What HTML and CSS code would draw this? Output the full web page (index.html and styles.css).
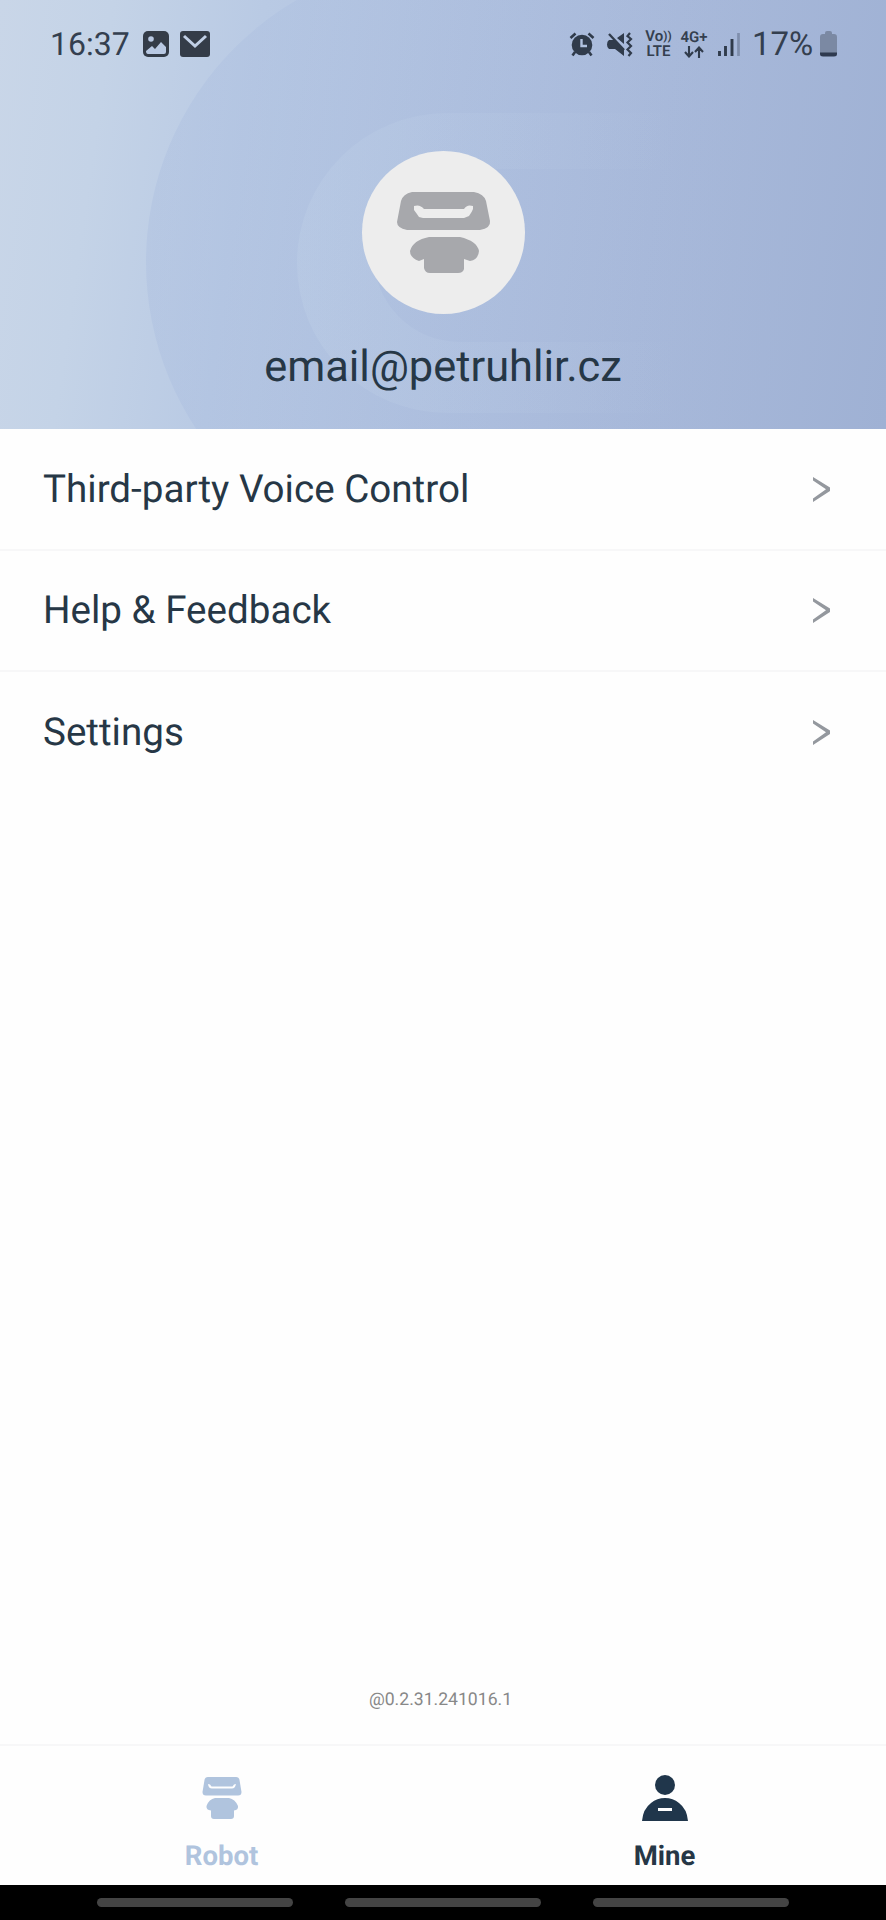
FILE: index.html
```html
<!DOCTYPE html>
<html lang="en">
<head>
  <meta charset="UTF-8">
  <meta name="viewport" content="width=device-width, initial-scale=1.0">
  <title>Mine</title>
  <link rel="stylesheet" href="styles.css">
</head>
<body>
  <header class="header">
    <!-- background rings -->
    <svg class="header-bg" width="886" height="429" viewBox="0 0 886 429">
      <defs>
        <linearGradient id="disc" gradientUnits="userSpaceOnUse" x1="146" y1="0" x2="800" y2="0">
          <stop offset="0" stop-color="#a2b6dc" stop-opacity=".28"/>
          <stop offset="1" stop-color="#a2b6dc" stop-opacity="0"/>
        </linearGradient>
        <linearGradient id="ring" gradientUnits="userSpaceOnUse" x1="297" y1="0" x2="680" y2="0">
          <stop offset="0" stop-color="#c4d5ea" stop-opacity=".26"/>
          <stop offset="1" stop-color="#c4d5ea" stop-opacity="0"/>
        </linearGradient>
      </defs>
      <path fill="url(#disc)" d="M886 -41H449A303 303 0 0 0 449 565H886Z"/>
      <path fill="url(#ring)" d="M720 113H447A150 150 0 0 0 447 413H720V342H460A86.500 86.500 0 0 1 460 169H720Z"/>
    </svg>

    <div class="status">
      <span class="time">16:37</span>
      <svg class="photo" width="26" height="26" viewBox="0 0 26 26">
        <rect width="26" height="26" rx="5" fill="#343c48"/>
        <circle cx="8" cy="8" r="2.800" fill="#b9c9e3"/>
        <path d="M3 20L9 15L12 18L18 11L23 16V21Q23 23 21 23H5Q3 23 3 20Z" fill="#b9c9e3"/>
      </svg>
      <svg class="mail" width="30" height="26" viewBox="0 0 30 26">
        <rect width="30" height="26" rx="3" fill="#343c48"/>
        <path d="M4 5L15 15L26 5" fill="none" stroke="#c0cfe6" stroke-width="3"/>
      </svg>
      <span class="spacer"></span>
      <svg class="alarm" width="26" height="25" viewBox="0 0 26 25">
        <circle cx="13" cy="13" r="10.300" fill="#303b4b"/>
        <path d="M1.500 6L6.500 1.500M24.500 6L19.500 1.500M6 20L3.500 23.500M20 20L22.500 23.500" stroke="#303b4b" stroke-width="2.600"/>
        <path d="M12.500 7V14H18" fill="none" stroke="#b0c1df" stroke-width="2.400"/>
      </svg>
      <svg class="mute" width="26" height="25" viewBox="0 0 26 25">
        <path d="M2 8H7L17 17V24L8 17H2Q0 16 0 12.500Q0 9 2 8ZM10 6L17 1V12Z" fill="#303b4b"/>
        <path d="M2 2L17 18" stroke="#303b4b" stroke-width="2.400"/>
        <path d="M23 1L20.500 4L24 7L20.500 10.500L24 14L20.500 17.500L24 21L21.500 24" fill="none" stroke="#303b4b" stroke-width="2.200"/>
      </svg>
      <span class="net volte"><span>Vo<small>))</small></span><span>LTE</span></span>
      <span class="net data"><span>4G+</span>
        <svg width="20" height="12" viewBox="0 0 20 12">
          <path d="M5 0V10M1 6L5 10.500L9 6M15 12V2M11 6L15 1.500L19 6" fill="none" stroke="#303b4b" stroke-width="2.100"/>
        </svg>
      </span>
      <svg class="signal" width="22" height="23" viewBox="0 0 22 23">
        <path d="M1.500 18V23M7.500 13V23M14 6V23" stroke="#303b4b" stroke-width="2.900"/>
        <path d="M20.500 0V23" stroke="#7f8eac" stroke-width="2.700"/>
      </svg>
      <span class="percent">17%</span>
      <svg class="battery" width="17" height="26" viewBox="0 0 17 26">
        <path d="M5 2Q5 0 7 0H10Q12 0 12 2V3H14Q17 3 17 6V22H0V6Q0 3 3 3H5Z" fill="#7b89a3"/>
        <path d="M0 21.500H17V23Q17 25.500 14 25.500H3Q0 25.500 0 23Z" fill="#2f3a4f"/>
      </svg>
    </div>

    <div class="avatar">
      <svg width="94" height="82" viewBox="0 0 94 82">
        <path fill-rule="evenodd" d="M15 0H77Q87 2 89 9L93 29Q94 36 83 38H10Q0 36 0 30L4 9Q6 2 15 0ZM17 14V18Q20 22 22 25L26 26H67L72 24Q75 20 76 17V14Q70 12 67 17H27Q23 12 17 14Z"/>
        <path d="M32 45H63Q80 49 82 59Q81 68 73 69L67 67V77Q66 81 61 81H33Q28 81 27 76V67L22 69Q13 66 13 59Q16 48 32 45Z"/>
      </svg>
    </div>
    <div class="email">email@petruhlir.cz</div>
  </header>

  <main class="menu">
    <div class="row">
      <span>Third-party Voice Control</span>
      <svg class="arrow" width="18" height="25" viewBox="0 0 18 25"><path d="M0 0L17 10.500V14L0 25V21.500L13 12.300L0 3.500Z"/></svg>
    </div>
    <div class="row">
      <span>Help &amp; Feedback</span>
      <svg class="arrow" width="18" height="25" viewBox="0 0 18 25"><path d="M0 0L17 10.500V14L0 25V21.500L13 12.300L0 3.500Z"/></svg>
    </div>
    <div class="row">
      <span>Settings</span>
      <svg class="arrow" width="18" height="25" viewBox="0 0 18 25"><path d="M0 0L17 10.500V14L0 25V21.500L13 12.300L0 3.500Z"/></svg>
    </div>
  </main>

  <div class="version">@0.2.31.241016.1</div>

  <nav class="tabs">
    <div class="tab">
      <svg width="40" height="43" viewBox="0 0 40 43">
        <path fill-rule="evenodd" d="M6 0H34Q37 0 37.500 3L39.500 15Q39.500 18.500 36 18.500H4Q0.500 18.500 0.500 15L2.500 3Q3 0 6 0ZM6 7Q6.500 11.500 10 11.500H30Q33 11.500 34 7L32 7.500L30.500 9.500H9.500L8 7.500Z"/>
        <path d="M13 21H27Q33 22 36 29Q36.500 33 32 33.500V39Q32 42 29 42H12Q9 42 9 39V33.500Q4 33 4.500 29Q7 22 13 21Z"/>
      </svg>
      <span>Robot</span>
    </div>
    <div class="tab active">
      <svg width="46" height="46" viewBox="0 0 46 46">
        <circle cx="23" cy="10" r="10"/>
        <path fill-rule="evenodd" d="M0 46Q1 34 9 28Q15 23 23 23Q31 23 37 28Q45 34 46 46ZM16 33V36H30V33Z"/>
      </svg>
      <span>Mine</span>
    </div>
  </nav>

  <div class="navbar"><i></i><i></i><i></i></div>
</body>
</html>
```
FILE: styles.css
```css
body {
  margin: 0;
  width: 886px;
  height: 1920px;
  display: flex;
  flex-direction: column;
  font-family: Roboto, sans-serif;
  text-rendering: geometricPrecision;
  color: #263746;
  background: #fefefe;
  overflow: hidden;
}

svg {
  display: block;
  flex: none;
}

.header {
  position: relative;
  height: 429px;
  flex: none;
  display: flex;
  flex-direction: column;
  align-items: center;
  background: linear-gradient(98deg, #c9d6e8 0%, #c4d3e7 12%, #b9cae4 28%, #b0c1df 50%, #a8b9da 72%, #9fb1d4 100%);
}

.header-bg {
  position: absolute;
  top: 0;
  left: 0;
}

/* status bar */
.status {
  position: relative;
  box-sizing: border-box;
  width: 100%;
  height: 88px;
  padding: 0 49px 0 50px;
  display: flex;
  align-items: center;
  color: #343f4f;
}

.time {
  width: 93px;
  font-size: 32px;
}

.mail {
  margin-left: 11px;
}

.spacer {
  flex: 1;
}

.mute {
  margin-left: 12px;
}

.net {
  display: flex;
  flex-direction: column;
  align-items: center;
  font-size: 15px;
  line-height: 15px;
  font-weight: 600;
}

.net small {
  font-size: 12px;
  line-height: 1;
  vertical-align: 1px;
}

.volte {
  width: 27px;
  margin-left: 12px;
}

.data {
  width: 28px;
  margin-left: 8px;
}

.net svg {
  margin-top: 1px;
}

.signal {
  margin-left: 10px;
}

.percent {
  width: 66px;
  margin-left: 12px;
  font-size: 33px;
}

.battery {
  margin-left: 2px;
}

/* profile */
.avatar {
  position: relative;
  box-sizing: border-box;
  width: 163px;
  height: 163px;
  margin-top: 63px;
  padding-top: 41px;
  padding-left: 35px;
  border-radius: 50%;
  background: #ededed;
  fill: #a7a8ac;
}

.email {
  position: relative;
  margin-top: 26px;
  font-size: 43.4px;
  line-height: 54px;
}

/* menu */
.row {
  box-sizing: border-box;
  height: 121.500px;
  padding: 1px 55px 0 43px;
  display: flex;
  align-items: center;
  justify-content: space-between;
  font-size: 38.600px;
  border-bottom: 2px solid #f7f7f8;
}

.row:last-child {
  border-bottom: none;
  padding-bottom: 2px;
}

.arrow {
  fill: #94989e;
}

.version {
  margin-top: auto;
  padding-bottom: 33px;
  padding-right: 5px;
  text-align: center;
  font-size: 17.600px;
  line-height: 22px;
  color: #888;
}

/* bottom tabs */
.tabs {
  height: 139px;
  flex: none;
  display: flex;
  border-top: 2px solid #f7f7f8;
}

.tab {
  flex: 1;
  display: flex;
  flex-direction: column;
  align-items: center;
  justify-content: flex-end;
  color: #b0c4de;
  fill: #b0c4de;
  font-size: 27.500px;
  font-weight: 700;
}

.tab span {
  margin-top: 20px;
  margin-bottom: 13px;
  line-height: 32px;
}

.active {
  color: #263746;
  fill: #20364b;
}

.active span {
  margin-top: 19px;
}

.navbar {
  height: 35px;
  flex: none;
  display: flex;
  justify-content: center;
  align-items: center;
  gap: 52px;
  background: #000;
}

.navbar i {
  width: 196px;
  height: 9px;
  border-radius: 5px;
  background: #444;
}
```
